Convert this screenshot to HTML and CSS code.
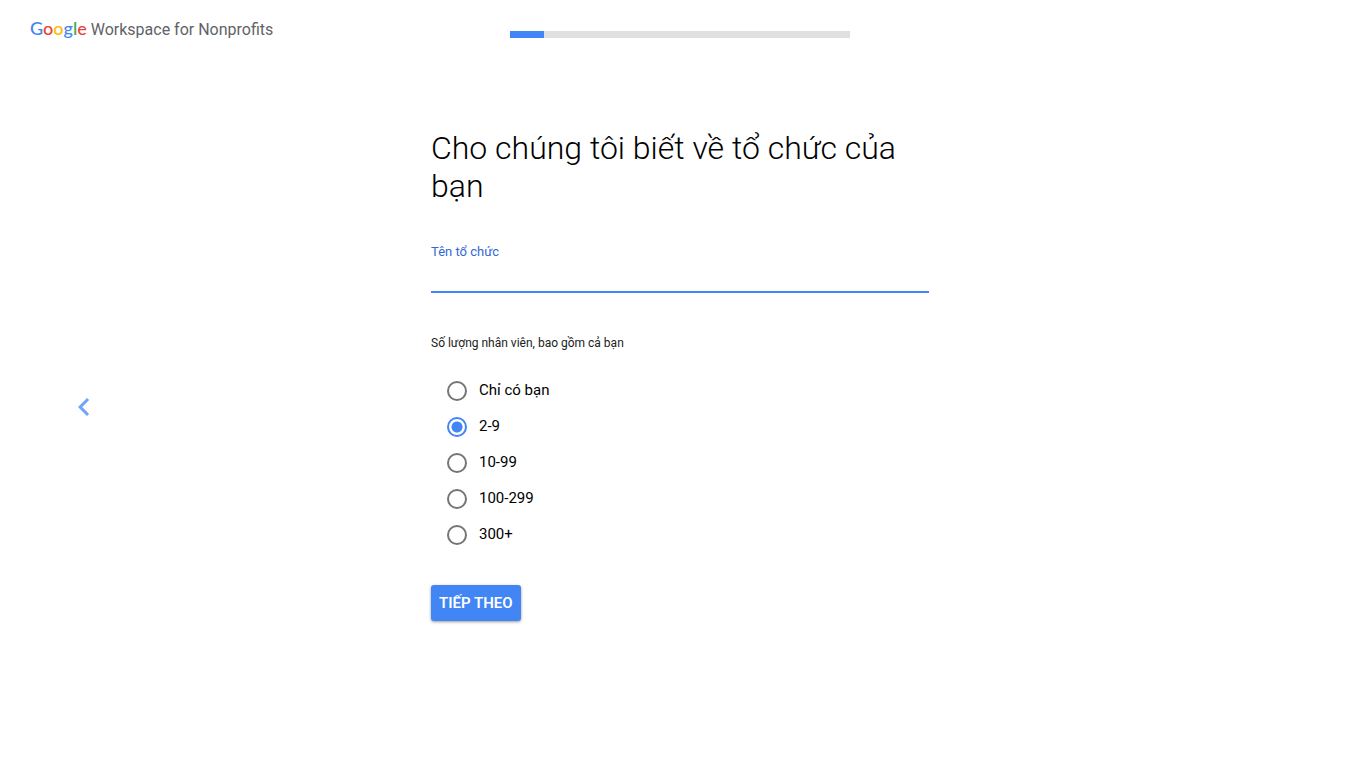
FILE: index.html
```html
<!DOCTYPE html>
<html lang="vi">
<head>
  <meta charset="UTF-8">
  <meta name="viewport" content="width=device-width, initial-scale=1.0">
  <title>Google Workspace for Nonprofits</title>
  <link rel="stylesheet" href="styles.css">
</head>
<body>
  <header class="header">
    <div class="logo"><span class="google"><span class="blue">G</span><span class="red">o</span><span class="yellow">o</span><span class="blue">g</span><span class="green">l</span><span class="red">e</span></span> Workspace for Nonprofits</div>
    <div class="progress">
      <div class="progress-bar" style="width: 10%"></div>
    </div>
  </header>

  <main class="main">
    <button type="button" class="back" aria-label="Quay lại">
      <svg width="36" height="36" viewBox="0 0 24 24" fill="#4285f4">
        <path d="M15.41 7.41L14 6l-6 6 6 6 1.41-1.41L10.83 12z"/>
      </svg>
    </button>

    <form class="form">
      <h1>Cho chúng tôi biết về tổ chức của bạn</h1>

      <label class="field-label" for="org-name">Tên tổ chức</label>
      <input type="text" class="field" name="org-name" id="org-name">

      <fieldset class="staff">
        <legend>Số lượng nhân viên, bao gồm cả bạn</legend>
        <label class="option"><input type="radio" name="staff" value="1"><span>Chỉ có bạn</span></label>
        <label class="option"><input type="radio" name="staff" value="2-9" checked><span>2-9</span></label>
        <label class="option"><input type="radio" name="staff" value="10-99"><span>10-99</span></label>
        <label class="option"><input type="radio" name="staff" value="100-299"><span>100-299</span></label>
        <label class="option"><input type="radio" name="staff" value="300+"><span>300+</span></label>
      </fieldset>

      <button type="submit" class="next">Tiếp theo</button>
    </form>
  </main>
</body>
</html>
```
FILE: styles.css
```css
* {
box-sizing: border-box;
}

body {
background-color: #fff;
color: #000;
font-family: Roboto, "Liberation Sans", sans-serif;
margin: 0;
}

.header {
display: grid;
grid-template-columns: 1fr 25% 1fr;
align-items: start;
height: 46px;
}

.logo {
padding: 17px 0 0 30px;
color: #5f6368;
font-size: 16px;
line-height: 22px;
white-space: nowrap;
}

.google {
font-family: Lato, Roboto, sans-serif;
font-size: 18px;
font-weight: 500;
}

.blue {
color: #4285f4;
}

.red {
color: #ea4335;
}

.yellow {
color: #fbbc04;
}

.green {
color: #34a853;
}

.progress {
margin-top: 31px;
height: 7px;
background-color: #e0e0e0;
}

.progress-bar {
height: 100%;
background-color: #4285f4;
}

.main {
display: grid;
grid-template-columns: 1fr minmax(0, 498px) 1fr;
min-height: calc(100vh - 46px);
}

.back {
justify-self: start;
align-self: center;
margin-left: 66px;
padding: 0;
border: none;
background: none;
cursor: pointer;
opacity: 0.75;
}

.back svg {
display: block;
}

.form {
padding: 83px 0 40px;
}

h1 {
margin: 0 0 39px;
font-size: 32px;
font-weight: 300;
line-height: 38px;
}

.field-label {
display: block;
color: #3367d6;
font-size: 13px;
line-height: 16px;
}

.field {
display: block;
width: 100%;
height: 33px;
padding: 0;
border: none;
border-bottom: 2px solid #4285f4;
outline: none;
font: inherit;
font-size: 16px;
}

.staff {
margin: 42px 0 32px;
padding: 0;
border: none;
}

.staff legend {
margin-bottom: 22px;
padding: 0;
color: #212121;
font-size: 12px;
line-height: 16px;
}

.option {
display: flex;
align-items: center;
gap: 12px;
height: 36px;
padding-left: 16px;
font-size: 15px;
cursor: pointer;
}

.option span {
padding-bottom: 2px;
}

.option input {
appearance: none;
width: 20px;
height: 20px;
margin: 0;
border: 2px solid #757575;
border-radius: 50%;
}

.option input:checked {
border-color: #4285f4;
background: radial-gradient(circle, #4285f4 5px, transparent 6px);
}

.next {
height: 36px;
padding: 0 8px;
border: none;
border-radius: 3px;
background-color: #4285f4;
box-shadow: 0 1px 3px rgba(0, 0, 0, 0.4);
color: #fff;
font-family: inherit;
font-size: 15px;
font-weight: 600;
text-transform: uppercase;
cursor: pointer;
}
```
